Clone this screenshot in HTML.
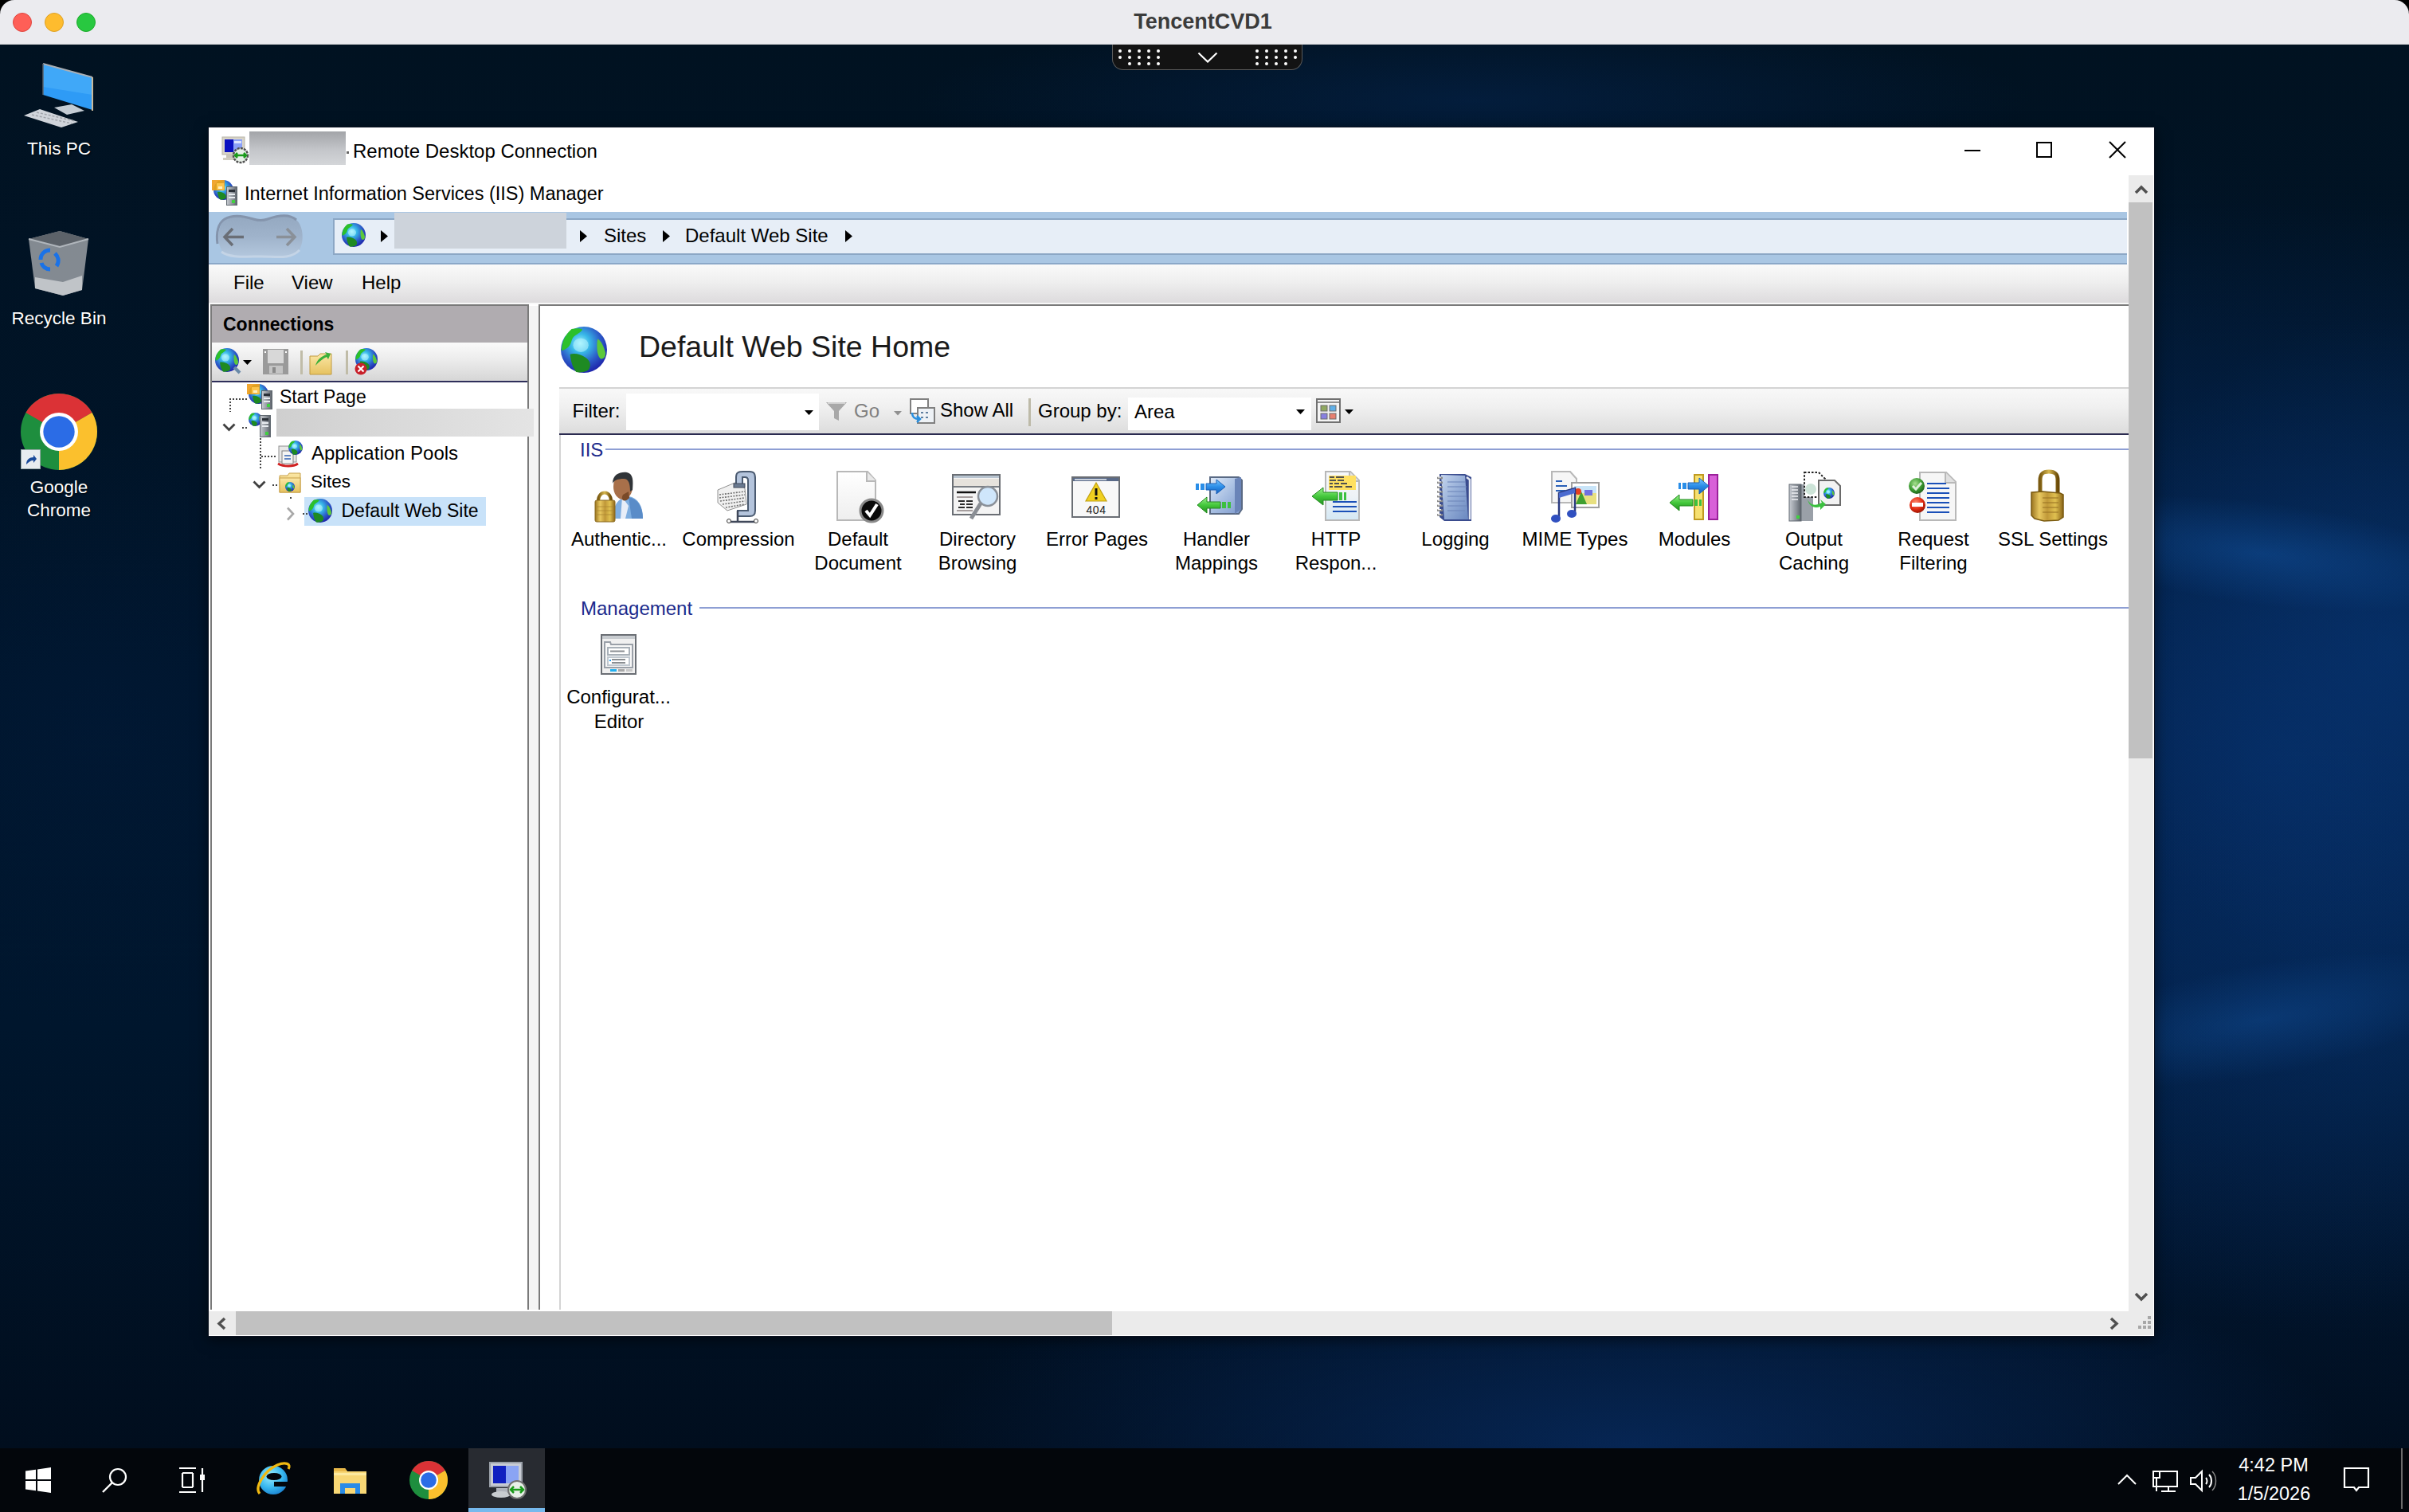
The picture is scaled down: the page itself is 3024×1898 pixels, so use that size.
<!DOCTYPE html>
<html><head><meta charset="utf-8">
<style>
*{margin:0;padding:0;box-sizing:border-box}
html,body{width:3024px;height:1898px;overflow:hidden;background:#000}
body{position:relative;font-family:"Liberation Sans",sans-serif;}
.a{position:absolute}
svg{position:absolute;overflow:visible}
.t{position:absolute;white-space:nowrap;line-height:1;font-size:24px;color:#000}
#desk{left:0;top:56px;width:3024px;height:1762px;
 background:
  radial-gradient(ellipse 700px 110px at 1850px 70px, rgba(6,42,92,0.45), rgba(5,35,90,0) 100%),
  radial-gradient(ellipse 420px 380px at 130px 860px, rgba(4,34,80,0.2), rgba(3,20,50,0) 100%),
  radial-gradient(ellipse 380px 420px at 3000px 760px, rgba(12,70,150,0.3), rgba(10,50,120,0) 100%),
  radial-gradient(ellipse 380px 380px at 2960px 1250px, rgba(12,70,150,0.15), rgba(10,50,120,0) 100%),
  radial-gradient(ellipse 900px 700px at 2850px 900px, rgba(6,48,108,0.72), rgba(5,35,90,0) 100%),
  radial-gradient(ellipse 900px 260px at 2050px 1760px, rgba(8,45,100,0.75), rgba(5,35,90,0) 100%),
  radial-gradient(ellipse 1600px 900px at 2300px 1000px, rgba(3,30,70,0.7), rgba(3,20,50,0) 100%),
  linear-gradient(180deg,#011221 0%,#00152b 45%,#00162d 70%,#010e1e 100%);}
.deskt{position:absolute;white-space:nowrap;line-height:1;font-size:22.5px;color:#fff;text-align:center;text-shadow:1px 1px 2px rgba(0,0,0,.8)}
</style></head><body>
<svg width="0" height="0" style="position:absolute"><defs>
<radialGradient id="gGlobe" cx="0.42" cy="0.36" r="0.68"><stop offset="0" stop-color="#a8f4ff"/><stop offset="0.3" stop-color="#38b8e8"/><stop offset="0.65" stop-color="#2c5cc8"/><stop offset="1" stop-color="#1c1ea8"/></radialGradient>
<radialGradient id="gLand" cx="0.35" cy="0.3" r="0.8"><stop offset="0" stop-color="#9cf07a"/><stop offset="0.5" stop-color="#36c234"/><stop offset="1" stop-color="#1a7a22"/></radialGradient>
<linearGradient id="gGold" x1="0" y1="0" x2="1" y2="0"><stop offset="0" stop-color="#9a7420"/><stop offset="0.25" stop-color="#e8c860"/><stop offset="0.5" stop-color="#c09838"/><stop offset="0.75" stop-color="#e0c050"/><stop offset="1" stop-color="#8a6418"/></linearGradient>
<linearGradient id="gShackle" x1="0" y1="0" x2="1" y2="0"><stop offset="0" stop-color="#7a5a10"/><stop offset="0.5" stop-color="#d8b850"/><stop offset="1" stop-color="#6a4a08"/></linearGradient>
<linearGradient id="gBlueArrow" x1="0" y1="0" x2="0" y2="1"><stop offset="0" stop-color="#7cc8ff"/><stop offset="0.5" stop-color="#2c8ee8"/><stop offset="1" stop-color="#1460c0"/></linearGradient>
<linearGradient id="gGreenArrow" x1="0" y1="0" x2="0" y2="1"><stop offset="0" stop-color="#9cf08c"/><stop offset="0.5" stop-color="#44c83c"/><stop offset="1" stop-color="#22901e"/></linearGradient>
<linearGradient id="gBox" x1="0" y1="0" x2="1" y2="1"><stop offset="0" stop-color="#dfeaf8"/><stop offset="0.5" stop-color="#a8bfe2"/><stop offset="1" stop-color="#7c98cc"/></linearGradient>
<linearGradient id="gBook" x1="0" y1="0" x2="1" y2="1"><stop offset="0" stop-color="#c6d6ee"/><stop offset="0.5" stop-color="#93acd6"/><stop offset="1" stop-color="#6a88c0"/></linearGradient>
<linearGradient id="gServer" x1="0" y1="0" x2="1" y2="0"><stop offset="0" stop-color="#c8ccd2"/><stop offset="0.6" stop-color="#8a9098"/><stop offset="1" stop-color="#5a6068"/></linearGradient>
<linearGradient id="gFolder" x1="0" y1="0" x2="0" y2="1"><stop offset="0" stop-color="#fbe7a6"/><stop offset="1" stop-color="#e6c260"/></linearGradient>
<radialGradient id="gRed" cx="0.4" cy="0.35" r="0.7"><stop offset="0" stop-color="#ff8a70"/><stop offset="0.6" stop-color="#e02a10"/><stop offset="1" stop-color="#901000"/></radialGradient>
<radialGradient id="gGreen" cx="0.4" cy="0.35" r="0.7"><stop offset="0" stop-color="#a8e090"/><stop offset="0.6" stop-color="#3a9a30"/><stop offset="1" stop-color="#1a5a18"/></radialGradient>
<linearGradient id="gDoc" x1="0" y1="0" x2="0" y2="1"><stop offset="0" stop-color="#ffffff"/><stop offset="1" stop-color="#eeeeee"/></linearGradient>
<linearGradient id="gBlueDoc" x1="0" y1="0" x2="0" y2="1"><stop offset="0" stop-color="#f6f8fa"/><stop offset="0.5" stop-color="#eef2f6"/><stop offset="1" stop-color="#d4e8f4"/></linearGradient>
</defs></svg>
<div id="desk" class="a"></div>
<div class="a" style="left:2560px;top:630px;width:560px;height:130px;transform:rotate(7deg);background:radial-gradient(ellipse closest-side, rgba(22,95,180,0.38), rgba(22,95,180,0))"></div>
<div class="a" style="left:2560px;top:1210px;width:560px;height:140px;transform:rotate(-10deg);background:radial-gradient(ellipse closest-side, rgba(22,95,180,0.32), rgba(22,95,180,0))"></div>
<div class="a" style="left:0px;top:0px;width:3024px;height:56px;background:#ebebef;border-radius:18px 18px 0 0;"></div>
<div class="a" style="left:0px;top:55px;width:3024px;height:1px;background:#d0d0d4"></div>
<div class="a" style="left:16px;top:16px;width:24px;height:24px;border-radius:50%;background:#fe5f57;border:1px solid #e0443e"></div>
<div class="a" style="left:56px;top:16px;width:24px;height:24px;border-radius:50%;background:#febc2e;border:1px solid #dea123"></div>
<div class="a" style="left:96px;top:16px;width:24px;height:24px;border-radius:50%;background:#28c840;border:1px solid #1aab29"></div>
<div class="t" style="left:1210px;width:600px;text-align:center;top:14.1px;font-size:27px;color:#3b3b3b;font-weight:700;">TencentCVD1</div>
<div class="a" style="left:1396px;top:56px;width:239px;height:32px;background:#131313;border-radius:0 0 14px 14px;border:1px solid #5a5a5a;border-top:none"></div>
<svg class="a" style="left:1396px;top:56px" width="239" height="32" viewBox="0 0 239 32"><circle cx="10" cy="8" r="2" fill="#fff"/><circle cx="22" cy="8" r="2" fill="#fff"/><circle cx="34" cy="8" r="2" fill="#fff"/><circle cx="46" cy="8" r="2" fill="#fff"/><circle cx="58" cy="8" r="2" fill="#fff"/><circle cx="10" cy="16" r="2" fill="#fff"/><circle cx="22" cy="16" r="2" fill="#fff"/><circle cx="34" cy="16" r="2" fill="#fff"/><circle cx="46" cy="16" r="2" fill="#fff"/><circle cx="58" cy="16" r="2" fill="#fff"/><circle cx="22" cy="24" r="2" fill="#fff"/><circle cx="34" cy="24" r="2" fill="#fff"/><circle cx="46" cy="24" r="2" fill="#fff"/><circle cx="58" cy="24" r="2" fill="#fff"/><circle cx="182" cy="8" r="2" fill="#fff"/><circle cx="194" cy="8" r="2" fill="#fff"/><circle cx="206" cy="8" r="2" fill="#fff"/><circle cx="218" cy="8" r="2" fill="#fff"/><circle cx="230" cy="8" r="2" fill="#fff"/><circle cx="182" cy="16" r="2" fill="#fff"/><circle cx="194" cy="16" r="2" fill="#fff"/><circle cx="206" cy="16" r="2" fill="#fff"/><circle cx="218" cy="16" r="2" fill="#fff"/><circle cx="230" cy="16" r="2" fill="#fff"/><circle cx="182" cy="24" r="2" fill="#fff"/><circle cx="194" cy="24" r="2" fill="#fff"/><circle cx="206" cy="24" r="2" fill="#fff"/><circle cx="218" cy="24" r="2" fill="#fff"/><path d="M108.5 10.5L120 21.5L131.5 10.5" stroke="#fff" stroke-width="2.2" fill="none"/></svg>
<svg class="a" style="left:30px;top:79px" width="88" height="84" viewBox="0 0 88 84"><path d="M24 1 L86 18 L86 59 L24 40Z" fill="#2e9bf6"/><path d="M24 1 L86 18 L86 40 L24 30Z" fill="#48aefa" opacity="0.7"/><path d="M24 1 L86 18" stroke="#a8aeb4" stroke-width="2"/><path d="M86 18 L86 60" stroke="#c8b89a" stroke-width="2"/><path d="M24 1 L24 40" stroke="#5a6068" stroke-width="1.5"/><path d="M38 56 L60 52 L76 60 L54 65Z" fill="#c4ccd4"/><path d="M0 66 L20 58 L68 74 L47 81Z" fill="#d0d4da"/><path d="M10 65 L60 76 M16 62 L64 73" stroke="#a0a4aa" stroke-width="1.5" stroke-dasharray="3 2"/></svg>
<div class="deskt" style="left:0;width:148px;top:176px">This PC</div>
<svg class="a" style="left:35px;top:288px" width="78" height="84" viewBox="0 0 78 84"><path d="M1 12 L40 2 L76 12 L68 76 L44 83 L9 74Z" fill="#8a9098" opacity="0.95"/><path d="M1 12 L40 2 L76 12 L40 22Z" fill="#5c6269"/><path d="M1 12 L40 22 L76 12" stroke="#b0b6bc" stroke-width="2" fill="none"/><path d="M9 60 L44 66 L68 58 L68 76 L44 83 L9 74Z" fill="#c0c4c8"/><path d="M16 38 C16 30 22 26 28 26 M34 30 C38 34 40 40 36 46 M28 50 C22 50 18 46 17 42" stroke="#1a72e8" stroke-width="5" fill="none"/></svg>
<div class="deskt" style="left:0;width:148px;top:389px">Recycle Bin</div>
<svg class="a" style="left:26px;top:494px" width="96" height="96" viewBox="0 0 96 96"><circle cx="48.0" cy="48.0" r="48.0" fill="#1e8e3e"/><path d="M48.0 48.0 L89.568 24.0 A48.0 48.0 0 0 0 6.432000000000002 24.0Z" fill="#db3236"/><path d="M48.0 48.0 L89.568 24.0 A48.0 48.0 0 0 1 48.0 96Z" fill="#fbc02d"/><circle cx="48.0" cy="48.0" r="24.0" fill="#fff"/><circle cx="48.0" cy="48.0" r="19.68" fill="#2b6ce6"/></svg>
<div class="a" style="left:26px;top:564px;width:25px;height:25px;background:#e8ecf0;border:1px solid #9aa;"></div>
<svg class="a" style="left:29px;top:567px" width="19" height="19" viewBox="0 0 19 19"><path d="M4 16 C4 10 8 7 13 7 L13 4 L17 9 L13 14 L13 11 C9 11 7 13 4 16Z" fill="#1a4a9a"/></svg>
<div class="deskt" style="left:0;width:148px;top:601px">Google</div>
<div class="deskt" style="left:0;width:148px;top:630px">Chrome</div>
<div class="a" style="left:261px;top:159px;width:2444px;height:1519px;background:#0b1220;box-shadow:0 4px 16px rgba(0,0,0,.55)"></div>
<div class="a" style="left:262px;top:160px;width:2442px;height:1517px;background:#fff"></div>
<svg class="a" style="left:278px;top:171px" width="34" height="34" viewBox="0 0 34 34"><rect x="1" y="1" width="28" height="22" fill="#d8d4c8" stroke="#b8b4a8"/><rect x="4" y="4" width="22" height="16" fill="#0a10c0"/><rect x="15" y="4" width="11" height="16" fill="#8aa0f8"/><rect x="16" y="6" width="9" height="3" fill="#dce4ff"/><rect x="6" y="23" width="12" height="4" fill="#c8c4b8"/><rect x="2" y="27" width="16" height="3" fill="#d0ccc0"/><circle cx="24" cy="24" r="9" fill="#e8f0e8" stroke="#505050" stroke-width="2.5" stroke-dasharray="3 1.2"/><path d="M18 24h12M20 21l-3 3 3 3M28 21l3 3-3 3" stroke="#1a9a1a" stroke-width="2.5" fill="none"/></svg>
<div class="a" style="left:313px;top:165px;width:121px;height:42px;background:linear-gradient(180deg,#a2a4a8,#c4c6ca 55%,#d4d6d9)"></div>
<div class="a" style="left:435px;top:190px;width:3px;height:3px;background:#666"></div>
<div class="t" style="left:443px;top:177.7px;font-size:24px;color:#000;font-weight:400;">Remote Desktop Connection</div>
<div class="a" style="left:2466px;top:188px;width:20px;height:2px;background:#000"></div>
<div class="a" style="left:2556px;top:178px;width:20px;height:20px;border:2px solid #000"></div>
<svg class="a" style="left:2647px;top:177px" width="22" height="22" viewBox="0 0 22 22"><path d="M1 1L21 21M21 1L1 21" stroke="#000" stroke-width="2"/></svg>
<svg class="a" style="left:268px;top:226px" width="25" height="25" viewBox="0 0 25 25"><circle cx="12.5" cy="12.5" r="12.5" fill="url(#gGlobe)"/><g transform="scale(0.4166666666666667)"><path fill="#2cc02a" d="M14 3 C20 2 26 2 28 4 C26 8 20 10 16 14 C13 18 14 24 8 28 C5 30 3 31 1 31 C1 22 4 12 14 3Z"/><path fill="#5cc83a" d="M48 16 C52 18 56 26 58 34 C58 40 56 42 52 42 C49 40 47 34 47 26 C47 22 47 18 48 16Z"/><path fill="#1e8a22" d="M12 36 C18 34 26 36 32 40 C38 44 40 50 36 56 C32 59 24 60 20 59 C16 54 13 46 12 36Z"/><ellipse cx="26" cy="24" rx="10" ry="9" fill="#b8f6ff" opacity="0.55"/></g></svg>
<svg class="a" style="left:266px;top:226px" width="32" height="32" viewBox="0 0 32 32"><rect x="0" y="0" width="16" height="13" fill="#f0a020" opacity="0.92"/><rect x="6" y="4" width="9" height="8" fill="#ffc850" opacity="0.9"/><rect x="8" y="8" width="5" height="3" fill="#fff0c0"/></svg>
<svg class="a" style="left:284px;top:234px" width="14" height="24" viewBox="0 0 14 24"><rect x="0.5" y="0.5" width="13" height="23" fill="url(#gServer)" stroke="#606870"/><rect x="3" y="4" width="8" height="3" fill="#2a3038"/><rect x="3" y="9" width="8" height="2" fill="#e8ecf0"/><rect x="3" y="13" width="8" height="2" fill="#e8ecf0"/><rect x="7" y="17" width="4" height="4" fill="#40d040"/></svg>
<div class="t" style="left:307px;top:231.7px;font-size:23.5px;color:#000;font-weight:400;">Internet Information Services (IIS) Manager</div>
<div class="a" style="left:262px;top:266px;width:2408px;height:66px;background:#a9c6e3;"></div>
<div class="a" style="left:262px;top:330px;width:2408px;height:2px;background:#8ba8c8"></div>
<div class="a" style="left:418px;top:274px;width:2252px;height:46px;background:#e7eef7;border-top:2px solid #8ca7c5;border-bottom:2px solid #8ca7c5;border-left:2px solid #8ca7c5"></div>
<svg class="a" style="left:268px;top:266px" width="116" height="60" viewBox="0 0 116 60"><defs><linearGradient id="gGlass" x1="0" y1="0" x2="0" y2="1"><stop offset="0" stop-color="#94a8c0"/><stop offset="0.5" stop-color="#9fb3cb"/><stop offset="1" stop-color="#b4c8de"/></linearGradient></defs><path d="M12 12 C20 3 36 4 50 8 C56 10 62 10 68 8 C82 4 98 3 106 12 C114 22 114 44 104 52 C94 60 76 56 60 56 C44 56 24 60 14 52 C4 44 4 22 12 12Z" fill="url(#gGlass)"/><path d="M5 40 C3 26 6 14 14 9 C24 3 38 5 50 9 C56 11 62 11 68 9 C82 4 96 3 104 10" stroke="#8494ac" stroke-width="3" fill="none"/><path d="M10 50 C20 58 40 56 60 56 C80 56 96 60 108 48" stroke="#c4d4e6" stroke-width="3" fill="none"/><path d="M15 31.5h23M24 21l-10 10.5 10 10.5" stroke="#6a6e76" stroke-width="3.5" fill="none"/><path d="M79 31.5h23M92 21l10 10.5-10 10.5" stroke="#8a9098" stroke-width="3.5" fill="none"/></svg>
<svg class="a" style="left:429px;top:280px" width="30" height="30" viewBox="0 0 30 30"><circle cx="15.0" cy="15.0" r="15.0" fill="url(#gGlobe)"/><g transform="scale(0.5)"><path fill="#2cc02a" d="M14 3 C20 2 26 2 28 4 C26 8 20 10 16 14 C13 18 14 24 8 28 C5 30 3 31 1 31 C1 22 4 12 14 3Z"/><path fill="#5cc83a" d="M48 16 C52 18 56 26 58 34 C58 40 56 42 52 42 C49 40 47 34 47 26 C47 22 47 18 48 16Z"/><path fill="#1e8a22" d="M12 36 C18 34 26 36 32 40 C38 44 40 50 36 56 C32 59 24 60 20 59 C16 54 13 46 12 36Z"/><ellipse cx="26" cy="24" rx="10" ry="9" fill="#b8f6ff" opacity="0.55"/></g></svg>
<svg class="a" style="left:478px;top:289px" width="9.0" height="15" viewBox="0 0 9.0 15"><path d="M0 0L9.0 7.5L0 15Z" fill="#000"/></svg>
<div class="a" style="left:495px;top:267px;width:216px;height:45px;background:#cdd3db"></div>
<svg class="a" style="left:728px;top:289px" width="9.0" height="15" viewBox="0 0 9.0 15"><path d="M0 0L9.0 7.5L0 15Z" fill="#000"/></svg>
<div class="t" style="left:758px;top:283.7px;font-size:24px;color:#000;font-weight:400;">Sites</div>
<svg class="a" style="left:832px;top:289px" width="9.0" height="15" viewBox="0 0 9.0 15"><path d="M0 0L9.0 7.5L0 15Z" fill="#000"/></svg>
<div class="t" style="left:860px;top:283.7px;font-size:24px;color:#000;font-weight:400;">Default Web Site</div>
<svg class="a" style="left:1061px;top:289px" width="9.0" height="15" viewBox="0 0 9.0 15"><path d="M0 0L9.0 7.5L0 15Z" fill="#000"/></svg>
<div class="a" style="left:262px;top:332px;width:2410px;height:48px;background:linear-gradient(180deg,#fafafa,#efefef 45%,#dddbdd)"></div>
<div class="a" style="left:262px;top:380px;width:2410px;height:2px;background:#f8f8f8"></div>
<div class="t" style="left:293px;top:343.4px;font-size:24px;color:#000;font-weight:400;">File</div>
<div class="t" style="left:366px;top:343.4px;font-size:24px;color:#000;font-weight:400;">View</div>
<div class="t" style="left:454px;top:343.4px;font-size:24px;color:#000;font-weight:400;">Help</div>
<div class="a" style="left:262px;top:382px;width:2410px;height:1264px;background:#fff"></div>
<div class="a" style="left:664px;top:384px;width:12px;height:1260px;background:#f4f4f4"></div>
<div class="a" style="left:264px;top:382px;width:400px;height:1262px;border:2px solid #7a7a7a;border-bottom:none;background:#fff"></div>
<div class="a" style="left:266px;top:384px;width:396px;height:46px;background:#b0acb0"></div>
<div class="a" style="left:266px;top:430px;width:396px;height:48px;background:linear-gradient(180deg,#fafafa,#ececec 45%,#d6d6d6)"></div>
<div class="a" style="left:266px;top:478px;width:396px;height:2px;background:#2e2e5a"></div>
<div class="t" style="left:280px;top:396.1px;font-size:23px;color:#000;font-weight:700;">Connections</div>
<div class="a" style="left:676px;top:382px;width:1996px;height:1262px;border-left:2px solid #7a7a7a;border-top:2px solid #7a7a7a;background:#fff"></div>
<svg class="a" style="left:270px;top:437px" width="30" height="30" viewBox="0 0 30 30"><circle cx="15.0" cy="15.0" r="15.0" fill="url(#gGlobe)"/><g transform="scale(0.5)"><path fill="#2cc02a" d="M14 3 C20 2 26 2 28 4 C26 8 20 10 16 14 C13 18 14 24 8 28 C5 30 3 31 1 31 C1 22 4 12 14 3Z"/><path fill="#5cc83a" d="M48 16 C52 18 56 26 58 34 C58 40 56 42 52 42 C49 40 47 34 47 26 C47 22 47 18 48 16Z"/><path fill="#1e8a22" d="M12 36 C18 34 26 36 32 40 C38 44 40 50 36 56 C32 59 24 60 20 59 C16 54 13 46 12 36Z"/><ellipse cx="26" cy="24" rx="10" ry="9" fill="#b8f6ff" opacity="0.55"/></g></svg>
<svg class="a" style="left:292px;top:459px" width="12" height="12" viewBox="0 0 12 12"><path d="M2 2 L9 9" stroke="#6a8aa8" stroke-width="4"/></svg>
<svg class="a" style="left:305px;top:452px" width="11" height="6.050000000000001" viewBox="0 0 11 6.050000000000001"><path d="M0 0L11 0L5.5 6.050000000000001Z" fill="#000"/></svg>
<svg class="a" style="left:330px;top:438px" width="32" height="32" viewBox="0 0 32 32"><rect x="0" y="0" width="32" height="32" fill="#9a9a9a"/><rect x="6" y="1" width="20" height="17" fill="#d8d8d8"/><rect x="8" y="21" width="17" height="10" fill="#c4c4c4"/><rect x="12" y="23" width="4" height="7" fill="#8a8a8a"/><rect x="2" y="3" width="2" height="2" fill="#fff"/><rect x="28" y="3" width="2" height="2" fill="#fff"/></svg>
<div class="a" style="left:377px;top:440px;width:3px;height:30px;background:#c0bca8"></div>
<svg class="a" style="left:388px;top:437px" width="30" height="34" viewBox="0 0 30 34"><path d="M1 10h10l3 -3h14v26H1Z" fill="url(#gFolder)" stroke="#c09a40"/><path d="M8 22 C10 14 16 10 22 8 L20 5 L27 7 L24 14 L22 11 C18 13 12 17 8 22Z" fill="#3ab03a"/></svg>
<div class="a" style="left:434px;top:440px;width:3px;height:30px;background:#c0bca8"></div>
<svg class="a" style="left:446px;top:437px" width="28" height="28" viewBox="0 0 28 28"><circle cx="14.0" cy="14.0" r="14.0" fill="url(#gGlobe)"/><g transform="scale(0.4666666666666667)"><path fill="#2cc02a" d="M14 3 C20 2 26 2 28 4 C26 8 20 10 16 14 C13 18 14 24 8 28 C5 30 3 31 1 31 C1 22 4 12 14 3Z"/><path fill="#5cc83a" d="M48 16 C52 18 56 26 58 34 C58 40 56 42 52 42 C49 40 47 34 47 26 C47 22 47 18 48 16Z"/><path fill="#1e8a22" d="M12 36 C18 34 26 36 32 40 C38 44 40 50 36 56 C32 59 24 60 20 59 C16 54 13 46 12 36Z"/><ellipse cx="26" cy="24" rx="10" ry="9" fill="#b8f6ff" opacity="0.55"/></g></svg>
<svg class="a" style="left:445px;top:455px" width="16" height="16" viewBox="0 0 16 16"><circle cx="8" cy="8" r="7.5" fill="#c8202a"/><path d="M4.5 4.5L11.5 11.5M11.5 4.5L4.5 11.5" stroke="#fff" stroke-width="2.2"/></svg>
<div class="a" style="left:288px;top:500px;width:22px;height:2px;background-image:repeating-linear-gradient(90deg,#444 0 2px,transparent 2px 4px);"></div>
<div class="a" style="left:288px;top:500px;width:2px;height:17px;background-image:repeating-linear-gradient(180deg,#444 0 2px,transparent 2px 4px);"></div>
<svg class="a" style="left:312px;top:482px" width="25" height="25" viewBox="0 0 25 25"><circle cx="12.5" cy="12.5" r="12.5" fill="url(#gGlobe)"/><g transform="scale(0.4166666666666667)"><path fill="#2cc02a" d="M14 3 C20 2 26 2 28 4 C26 8 20 10 16 14 C13 18 14 24 8 28 C5 30 3 31 1 31 C1 22 4 12 14 3Z"/><path fill="#5cc83a" d="M48 16 C52 18 56 26 58 34 C58 40 56 42 52 42 C49 40 47 34 47 26 C47 22 47 18 48 16Z"/><path fill="#1e8a22" d="M12 36 C18 34 26 36 32 40 C38 44 40 50 36 56 C32 59 24 60 20 59 C16 54 13 46 12 36Z"/><ellipse cx="26" cy="24" rx="10" ry="9" fill="#b8f6ff" opacity="0.55"/></g></svg>
<svg class="a" style="left:310px;top:482px" width="32" height="32" viewBox="0 0 32 32"><rect x="0" y="0" width="16" height="13" fill="#f0a020" opacity="0.92"/><rect x="6" y="4" width="9" height="8" fill="#ffc850" opacity="0.9"/><rect x="8" y="8" width="5" height="3" fill="#fff0c0"/></svg>
<svg class="a" style="left:328px;top:490px" width="14" height="24" viewBox="0 0 14 24"><rect x="0.5" y="0.5" width="13" height="23" fill="url(#gServer)" stroke="#606870"/><rect x="3" y="4" width="8" height="3" fill="#2a3038"/><rect x="3" y="9" width="8" height="2" fill="#e8ecf0"/><rect x="3" y="13" width="8" height="2" fill="#e8ecf0"/><rect x="7" y="17" width="4" height="4" fill="#40d040"/></svg>
<div class="t" style="left:351px;top:486.5px;font-size:23px;color:#000;font-weight:400;">Start Page</div>
<svg class="a" style="left:279px;top:531px" width="17" height="10" viewBox="0 0 17 10"><path d="M1.5 1.5L8.5 8.5L15.5 1.5" stroke="#404040" stroke-width="2.8" fill="none"/></svg>
<div class="a" style="left:304px;top:536px;width:8px;height:2px;background-image:repeating-linear-gradient(90deg,#444 0 2px,transparent 2px 4px);"></div>
<svg class="a" style="left:312px;top:518px" width="17" height="17" viewBox="0 0 17 17"><circle cx="8.5" cy="8.5" r="8.5" fill="url(#gGlobe)"/><g transform="scale(0.2833333333333333)"><path fill="#2cc02a" d="M14 3 C20 2 26 2 28 4 C26 8 20 10 16 14 C13 18 14 24 8 28 C5 30 3 31 1 31 C1 22 4 12 14 3Z"/><path fill="#5cc83a" d="M48 16 C52 18 56 26 58 34 C58 40 56 42 52 42 C49 40 47 34 47 26 C47 22 47 18 48 16Z"/><path fill="#1e8a22" d="M12 36 C18 34 26 36 32 40 C38 44 40 50 36 56 C32 59 24 60 20 59 C16 54 13 46 12 36Z"/><ellipse cx="26" cy="24" rx="10" ry="9" fill="#b8f6ff" opacity="0.55"/></g></svg>
<svg class="a" style="left:326px;top:521px" width="14" height="28" viewBox="0 0 14 28"><rect x="0.5" y="0.5" width="13" height="27" fill="url(#gServer)" stroke="#606870"/><rect x="3" y="4" width="8" height="3" fill="#2a3038"/><rect x="3" y="9" width="8" height="2" fill="#e8ecf0"/><rect x="3" y="13" width="8" height="2" fill="#e8ecf0"/><rect x="7" y="21" width="4" height="4" fill="#40d040"/></svg>
<div class="a" style="left:347px;top:513px;width:323px;height:35px;background:linear-gradient(90deg,#cfcfcf,#d8d8d8 40%,#e4e4e4)"></div>
<div class="a" style="left:326px;top:550px;width:2px;height:40px;background-image:repeating-linear-gradient(180deg,#444 0 2px,transparent 2px 4px);"></div>
<div class="a" style="left:328px;top:572px;width:20px;height:2px;background-image:repeating-linear-gradient(90deg,#444 0 2px,transparent 2px 4px);"></div>
<svg class="a" style="left:348px;top:554px" width="33" height="32" viewBox="0 0 33 32"><rect x="2" y="6" width="22" height="20" fill="#e8e8e8" stroke="#909090"/><rect x="6" y="12" width="14" height="16" fill="#f4f4f4" stroke="#808080"/><path d="M9 18h8M9 22h8" stroke="#3060b0" stroke-width="1.5"/><path d="M1 28 C8 32 20 32 26 28" stroke="#d02020" stroke-width="3" fill="none"/></svg>
<svg class="a" style="left:362px;top:553px" width="18" height="18" viewBox="0 0 18 18"><circle cx="9.0" cy="9.0" r="9.0" fill="url(#gGlobe)"/><g transform="scale(0.3)"><path fill="#2cc02a" d="M14 3 C20 2 26 2 28 4 C26 8 20 10 16 14 C13 18 14 24 8 28 C5 30 3 31 1 31 C1 22 4 12 14 3Z"/><path fill="#5cc83a" d="M48 16 C52 18 56 26 58 34 C58 40 56 42 52 42 C49 40 47 34 47 26 C47 22 47 18 48 16Z"/><path fill="#1e8a22" d="M12 36 C18 34 26 36 32 40 C38 44 40 50 36 56 C32 59 24 60 20 59 C16 54 13 46 12 36Z"/><ellipse cx="26" cy="24" rx="10" ry="9" fill="#b8f6ff" opacity="0.55"/></g></svg>
<div class="t" style="left:391px;top:556.7px;font-size:24px;color:#000;font-weight:400;">Application Pools</div>
<svg class="a" style="left:317px;top:603px" width="17" height="10" viewBox="0 0 17 10"><path d="M1.5 1.5L8.5 8.5L15.5 1.5" stroke="#404040" stroke-width="2.8" fill="none"/></svg>
<div class="a" style="left:342px;top:608px;width:8px;height:2px;background-image:repeating-linear-gradient(90deg,#444 0 2px,transparent 2px 4px);"></div>
<svg class="a" style="left:350px;top:592px" width="28" height="27" viewBox="0 0 28 27"><path d="M1 5h10l2 -3h14v24H1Z" fill="url(#gFolder)" stroke="#c8a048"/><rect x="1" y="8" width="26" height="18" fill="url(#gFolder)" stroke="#c8a048"/></svg>
<svg class="a" style="left:358px;top:605px" width="12" height="12" viewBox="0 0 12 12"><circle cx="6.0" cy="6.0" r="6.0" fill="url(#gGlobe)"/><g transform="scale(0.2)"><path fill="#2cc02a" d="M14 3 C20 2 26 2 28 4 C26 8 20 10 16 14 C13 18 14 24 8 28 C5 30 3 31 1 31 C1 22 4 12 14 3Z"/><path fill="#5cc83a" d="M48 16 C52 18 56 26 58 34 C58 40 56 42 52 42 C49 40 47 34 47 26 C47 22 47 18 48 16Z"/><path fill="#1e8a22" d="M12 36 C18 34 26 36 32 40 C38 44 40 50 36 56 C32 59 24 60 20 59 C16 54 13 46 12 36Z"/><ellipse cx="26" cy="24" rx="10" ry="9" fill="#b8f6ff" opacity="0.55"/></g></svg>
<div class="t" style="left:390px;top:594.0px;font-size:22.5px;color:#000;font-weight:400;">Sites</div>
<div class="a" style="left:364px;top:624px;width:2px;height:2px;background:#444"></div>
<div class="a" style="left:382px;top:624px;width:228px;height:36px;background:#c8e2f9"></div>
<svg class="a" style="left:359px;top:636px" width="11" height="18" viewBox="0 0 11 18"><path d="M2 1.5L9 9L2 16.5" stroke="#a8a8a8" stroke-width="2.6" fill="none"/></svg>
<div class="a" style="left:380px;top:644px;width:8px;height:2px;background-image:repeating-linear-gradient(90deg,#444 0 2px,transparent 2px 4px);"></div>
<svg class="a" style="left:387px;top:626px" width="30" height="30" viewBox="0 0 30 30"><circle cx="15.0" cy="15.0" r="15.0" fill="url(#gGlobe)"/><g transform="scale(0.5)"><path fill="#2cc02a" d="M14 3 C20 2 26 2 28 4 C26 8 20 10 16 14 C13 18 14 24 8 28 C5 30 3 31 1 31 C1 22 4 12 14 3Z"/><path fill="#5cc83a" d="M48 16 C52 18 56 26 58 34 C58 40 56 42 52 42 C49 40 47 34 47 26 C47 22 47 18 48 16Z"/><path fill="#1e8a22" d="M12 36 C18 34 26 36 32 40 C38 44 40 50 36 56 C32 59 24 60 20 59 C16 54 13 46 12 36Z"/><ellipse cx="26" cy="24" rx="10" ry="9" fill="#b8f6ff" opacity="0.55"/></g></svg>
<div class="t" style="left:428.5px;top:630.3px;font-size:23px;color:#000;font-weight:400;">Default Web Site</div>
<svg class="a" style="left:704px;top:410px" width="58" height="58" viewBox="0 0 58 58"><circle cx="29.0" cy="29.0" r="29.0" fill="url(#gGlobe)"/><g transform="scale(0.9666666666666667)"><path fill="#2cc02a" d="M14 3 C20 2 26 2 28 4 C26 8 20 10 16 14 C13 18 14 24 8 28 C5 30 3 31 1 31 C1 22 4 12 14 3Z"/><path fill="#5cc83a" d="M48 16 C52 18 56 26 58 34 C58 40 56 42 52 42 C49 40 47 34 47 26 C47 22 47 18 48 16Z"/><path fill="#1e8a22" d="M12 36 C18 34 26 36 32 40 C38 44 40 50 36 56 C32 59 24 60 20 59 C16 54 13 46 12 36Z"/><ellipse cx="26" cy="24" rx="10" ry="9" fill="#b8f6ff" opacity="0.55"/></g></svg>
<div class="t" style="left:802px;top:416.8px;font-size:37.5px;color:#1a1a1a;font-weight:400;">Default Web Site Home</div>
<div class="a" style="left:702px;top:486px;width:1970px;height:59px;background:linear-gradient(180deg,#f8f8f8,#f0f0f0 40%,#dcdcdc);border-top:2px solid #d4d4d4"></div>
<div class="a" style="left:702px;top:544px;width:1970px;height:2px;background:#2b2b50"></div>
<div class="a" style="left:702px;top:546px;width:2px;height:1098px;background:#d4d4d4"></div>
<div class="t" style="left:718.5px;top:503.7px;font-size:24px;color:#000;font-weight:400;">Filter:</div>
<div class="a" style="left:786px;top:494px;width:242px;height:46px;background:#fff"></div>
<svg class="a" style="left:1010px;top:515px" width="11" height="6.050000000000001" viewBox="0 0 11 6.050000000000001"><path d="M0 0L11 0L5.5 6.050000000000001Z" fill="#000"/></svg>
<svg class="a" style="left:1036px;top:503px" width="28" height="27" viewBox="0 0 28 27"><path d="M1 2h26l-10 11v12l-6 -3v-9Z" fill="#a8a8a8"/><path d="M3 3h22" stroke="#d0d0d0" stroke-width="2"/></svg>
<div class="t" style="left:1072px;top:503.7px;font-size:24px;color:#808080;font-weight:400;">Go</div>
<svg class="a" style="left:1122px;top:516px" width="10" height="5.5" viewBox="0 0 10 5.5"><path d="M0 0L10 0L5.0 5.5Z" fill="#909090"/></svg>
<svg class="a" style="left:1142px;top:500px" width="32" height="32" viewBox="0 0 32 32"><rect x="1" y="1" width="22" height="18" fill="#fff" stroke="#808080" stroke-width="2"/><rect x="10" y="12" width="21" height="19" fill="#eef2f6" stroke="#808080" stroke-width="2"/><path d="M14 18h3M20 18h3M14 24h3M20 24h3" stroke="#6080a0" stroke-width="2"/><path d="M3 18 C3 24 6 26 12 26 M9 22l4 4-4 4" stroke="#2a90e0" stroke-width="2.5" fill="none"/></svg>
<div class="t" style="left:1180px;top:503.2px;font-size:24px;color:#000;font-weight:400;">Show All</div>
<div class="a" style="left:1291px;top:500px;width:3px;height:35px;background:#bdbaa8"></div>
<div class="t" style="left:1303px;top:503.7px;font-size:24px;color:#000;font-weight:400;">Group by:</div>
<div class="a" style="left:1416px;top:499px;width:230px;height:41px;background:#fff"></div>
<div class="t" style="left:1424px;top:504.7px;font-size:24px;color:#000;font-weight:400;">Area</div>
<svg class="a" style="left:1627px;top:514px" width="11" height="6.050000000000001" viewBox="0 0 11 6.050000000000001"><path d="M0 0L11 0L5.5 6.050000000000001Z" fill="#000"/></svg>
<svg class="a" style="left:1652px;top:500px" width="31" height="31" viewBox="0 0 31 31"><rect x="1" y="1" width="29" height="29" fill="#f4f4f4" stroke="#707070" stroke-width="2"/><path d="M2 5h27" stroke="#909090" stroke-width="2"/><rect x="6" y="9" width="8" height="7" fill="#90a860" stroke="#6a6a6a"/><rect x="17" y="9" width="8" height="7" fill="#60b0e8" stroke="#6a6a6a"/><rect x="6" y="19" width="8" height="7" fill="#8880e0" stroke="#6a6a6a"/><rect x="17" y="19" width="8" height="7" fill="#e88070" stroke="#6a6a6a"/></svg>
<svg class="a" style="left:1688px;top:514px" width="11" height="6.050000000000001" viewBox="0 0 11 6.050000000000001"><path d="M0 0L11 0L5.5 6.050000000000001Z" fill="#000"/></svg>
<div class="t" style="left:728px;top:553.4px;font-size:24px;color:#1c2a8c;font-weight:400;">IIS</div>
<div class="a" style="left:760px;top:563px;width:1912px;height:2px;background:#8e9fd4"></div>
<div class="t" style="left:477px;width:600px;text-align:center;top:664.7px;font-size:24px;color:#000;font-weight:400;">Authentic...</div>
<div class="t" style="left:627px;width:600px;text-align:center;top:664.7px;font-size:24px;color:#000;font-weight:400;">Compression</div>
<div class="t" style="left:777px;width:600px;text-align:center;top:664.7px;font-size:24px;color:#000;font-weight:400;">Default</div>
<div class="t" style="left:777px;width:600px;text-align:center;top:695.4px;font-size:24px;color:#000;font-weight:400;">Document</div>
<div class="t" style="left:927px;width:600px;text-align:center;top:664.7px;font-size:24px;color:#000;font-weight:400;">Directory</div>
<div class="t" style="left:927px;width:600px;text-align:center;top:695.4px;font-size:24px;color:#000;font-weight:400;">Browsing</div>
<div class="t" style="left:1077px;width:600px;text-align:center;top:664.7px;font-size:24px;color:#000;font-weight:400;">Error Pages</div>
<div class="t" style="left:1227px;width:600px;text-align:center;top:664.7px;font-size:24px;color:#000;font-weight:400;">Handler</div>
<div class="t" style="left:1227px;width:600px;text-align:center;top:695.4px;font-size:24px;color:#000;font-weight:400;">Mappings</div>
<div class="t" style="left:1377px;width:600px;text-align:center;top:664.7px;font-size:24px;color:#000;font-weight:400;">HTTP</div>
<div class="t" style="left:1377px;width:600px;text-align:center;top:695.4px;font-size:24px;color:#000;font-weight:400;">Respon...</div>
<div class="t" style="left:1527px;width:600px;text-align:center;top:664.7px;font-size:24px;color:#000;font-weight:400;">Logging</div>
<div class="t" style="left:1677px;width:600px;text-align:center;top:664.7px;font-size:24px;color:#000;font-weight:400;">MIME Types</div>
<div class="t" style="left:1827px;width:600px;text-align:center;top:664.7px;font-size:24px;color:#000;font-weight:400;">Modules</div>
<div class="t" style="left:1977px;width:600px;text-align:center;top:664.7px;font-size:24px;color:#000;font-weight:400;">Output</div>
<div class="t" style="left:1977px;width:600px;text-align:center;top:695.4px;font-size:24px;color:#000;font-weight:400;">Caching</div>
<div class="t" style="left:2127px;width:600px;text-align:center;top:664.7px;font-size:24px;color:#000;font-weight:400;">Request</div>
<div class="t" style="left:2127px;width:600px;text-align:center;top:695.4px;font-size:24px;color:#000;font-weight:400;">Filtering</div>
<div class="t" style="left:2277px;width:600px;text-align:center;top:664.7px;font-size:24px;color:#000;font-weight:400;">SSL Settings</div>
<svg class="a" style="left:745px;top:591px" width="64" height="66" viewBox="0 0 64 66"><path d="M25 60 C24 44 30 34 44 32 C56 34 62 44 62 60Z" fill="#7eaee0"/><path d="M44 33 C56 35 62 46 62 60 L48 60Z" fill="#5a8cc8"/><path d="M36 33 L44 44 L40 60 L34 60Z" fill="#e8eef8"/><ellipse cx="37" cy="20" rx="12" ry="16" fill="#a8704a"/><path d="M37 30 C33 38 40 40 45 34 L44 26Z" fill="#7a4a28"/><path d="M24 16 C24 4 34 1 42 2 C50 4 50 12 49 24 L46 26 C46 16 44 10 38 10 C30 10 26 12 24 16Z" fill="#303438"/><path d="M6 38 C6 24 22 24 22 38" stroke="url(#gShackle)" stroke-width="4" fill="none"/><rect x="2" y="37" width="25" height="27" rx="2" fill="url(#gGold)" stroke="#8a6a20" stroke-width="1"/><path d="M4 45h21M4 50h21M4 55h21" stroke="#a88430" stroke-width="1" opacity="0.7"/></svg>
<svg class="a" style="left:895px;top:591px" width="64" height="66" viewBox="0 0 64 66"><path d="M6 24 L30 14 L40 22 L42 42 L18 50 L6 40Z" fill="#f0f0f0" stroke="#909090"/><path d="M8 30 L40 26 M8 34 L40 30 M9 38 L40 34 M12 42 L40 38 M16 46 L40 42" stroke="#707070" stroke-width="1.6" stroke-dasharray="2 1.5"/><path d="M29 18 L29 8 C29 2 32 1 38 1 L46 1 C52 1 53 4 53 10 L53 50 C53 56 50 57 46 57 L31 57 L31 50 L44 50 L44 12 C44 9 43 8 40 8 L37 8 L37 18Z" fill="#b4c4dc" stroke="#4a5a70" stroke-width="2"/><rect x="26" y="16" width="14" height="5" fill="#6a7a90" stroke="#40485a"/><path d="M31 50 L31 64 M20 64 L54 64" stroke="#40485a" stroke-width="2.5"/><circle cx="20" cy="63" r="2.5" fill="#fff" stroke="#333"/><circle cx="54" cy="63" r="2.5" fill="#fff" stroke="#333"/></svg>
<svg class="a" style="left:1045px;top:591px" width="66" height="66" viewBox="0 0 66 66"><path d="M6 1 L44 1 L54 12 L54 62 L6 62Z" fill="url(#gDoc)" stroke="#b8b8b8" stroke-width="2"/><path d="M43 1 L43 13 L55 13" fill="#e8e8e8" stroke="#b8b8b8" stroke-width="2"/><circle cx="49" cy="50" r="14" fill="#0a0a0a" stroke="#8a8a8a" stroke-width="3"/><path d="M42 50 L47 56 L56 42" stroke="#fff" stroke-width="4" fill="none"/></svg>
<svg class="a" style="left:1195px;top:591px" width="66" height="66" viewBox="0 0 66 66"><rect x="1" y="5" width="59" height="50" fill="#f4f4f4" stroke="#6a6e74" stroke-width="2"/><rect x="2" y="6" width="57" height="3" fill="#b8c4d0"/><rect x="2" y="10" width="57" height="9" fill="#e6e2dc"/><path d="M2 20h57" stroke="#7a7e84" stroke-width="2"/><path d="M6 27h24" stroke="#111" stroke-width="2.5"/><path d="M6 33h20M6 50h20" stroke="#8a8080" stroke-width="1.5"/><path d="M8 38h8M18 38h8M10 42h6M18 42h8M8 46h8M18 46h8" stroke="#2a2a2a" stroke-width="2"/><path d="M36 41 L24 60" stroke="#8a8e94" stroke-width="5"/><circle cx="45" cy="32" r="12" fill="#cfe6fb" stroke="#8a9098" stroke-width="2.5"/></svg>
<svg class="a" style="left:1345px;top:591px" width="66" height="66" viewBox="0 0 66 66"><rect x="1" y="8" width="59" height="50" fill="#f8f8f8" stroke="#6a6e74" stroke-width="2"/><rect x="2" y="9" width="57" height="4" fill="#5a6a88"/><rect x="4" y="10" width="40" height="2" fill="#c8d0dc"/><path d="M31 15 L44 38 L18 38Z" fill="#f0d020" stroke="#c0a010" stroke-width="1.2"/><path d="M31 22v9" stroke="#111" stroke-width="3"/><rect x="29.5" y="33" width="3" height="3" fill="#111"/><text x="31" y="54" font-family="Liberation Sans" font-size="14" text-anchor="middle" fill="#222" letter-spacing="0.5">404</text></svg>
<svg class="a" style="left:1495px;top:591px" width="66" height="66" viewBox="0 0 66 66"><path d="M24 8 L60 8 L64 12 L64 48 L60 54 L24 54Z" fill="url(#gBox)" stroke="#5a6a84" stroke-width="2"/><path d="M55 10 L63 8 L63 48 L55 54Z" fill="#6a84b8"/><path d="M6 16h4v8H6Z M12 16h5v8h-5Z" fill="#2a8ee8"/><path d="M19 16 L32 16 L32 11 L43 20 L32 29 L32 24 L19 24Z" fill="url(#gBlueArrow)" stroke="#1a60b8" stroke-width="1"/><path d="M50 39h-4v8h4Z M44 39h-5v8h5Z" fill="#3cc040"/><path d="M37 39 L20 39 L20 33 L8 43 L20 53 L20 47 L37 47Z" fill="url(#gGreenArrow)" stroke="#228a1e" stroke-width="1"/></svg>
<svg class="a" style="left:1645px;top:591px" width="66" height="66" viewBox="0 0 66 66"><path d="M19 1 L50 1 L61 12 L61 62 L19 62Z" fill="url(#gBlueDoc)" stroke="#b8b8b8" stroke-width="2"/><path d="M49 1 L49 13 L61 13" fill="#e4e4e4" stroke="#b8b8b8" stroke-width="2"/><rect x="23" y="6" width="34" height="18" fill="#ffe060"/><path d="M24 8h6M32 8h10M24 12h8M34 12h8M24 16h4M30 16h6M38 16h8M24 20h4M30 20h10M44 20h8" stroke="#505050" stroke-width="2"/><path d="M28 39h30M28 45h30M28 51h30" stroke="#1a50b8" stroke-width="2"/><path d="M42 27h3v10h-3Z M36 27h4v10h-4Z" fill="#3cc040"/><path d="M34 27 L16 27 L16 21 L2 32 L16 43 L16 37 L34 37Z" fill="url(#gGreenArrow)" stroke="#228a1e" stroke-width="1"/></svg>
<svg class="a" style="left:1795px;top:591px" width="66" height="66" viewBox="0 0 66 66"><path d="M12 4 L44 4 L52 8 L52 63 L18 63 L12 58Z" fill="#3a4c8e"/><path d="M14 5 L44 6 L48 61 L18 61Z" fill="url(#gBook)"/><path d="M22 14h22M22 20h24M22 26h22M22 32h24M22 38h22M22 44h24M22 50h22" stroke="#6f88bc" stroke-width="2" opacity="0.55"/><path d="M46 8 L50 11 L50 61" stroke="#e8ecf4" stroke-width="2.5" fill="none"/><path d="M9 9.0h7" stroke="#8a8a8a" stroke-width="2.5"/><path d="M10 8.0h4" stroke="#f0f0f0" stroke-width="1.2"/><path d="M9 14.8h7" stroke="#8a8a8a" stroke-width="2.5"/><path d="M10 13.8h4" stroke="#f0f0f0" stroke-width="1.2"/><path d="M9 20.6h7" stroke="#8a8a8a" stroke-width="2.5"/><path d="M10 19.6h4" stroke="#f0f0f0" stroke-width="1.2"/><path d="M9 26.4h7" stroke="#8a8a8a" stroke-width="2.5"/><path d="M10 25.4h4" stroke="#f0f0f0" stroke-width="1.2"/><path d="M9 32.2h7" stroke="#8a8a8a" stroke-width="2.5"/><path d="M10 31.2h4" stroke="#f0f0f0" stroke-width="1.2"/><path d="M9 38.0h7" stroke="#8a8a8a" stroke-width="2.5"/><path d="M10 37.0h4" stroke="#f0f0f0" stroke-width="1.2"/><path d="M9 43.8h7" stroke="#8a8a8a" stroke-width="2.5"/><path d="M10 42.8h4" stroke="#f0f0f0" stroke-width="1.2"/><path d="M9 49.6h7" stroke="#8a8a8a" stroke-width="2.5"/><path d="M10 48.6h4" stroke="#f0f0f0" stroke-width="1.2"/><path d="M9 55.4h7" stroke="#8a8a8a" stroke-width="2.5"/><path d="M10 54.4h4" stroke="#f0f0f0" stroke-width="1.2"/></svg>
<svg class="a" style="left:1945px;top:591px" width="66" height="66" viewBox="0 0 66 66"><path d="M3 1 L26 1 L34 10 L34 40 L3 40Z" fill="#f6f6f6" stroke="#b8b8b8" stroke-width="2"/><path d="M8 13h8M8 19h14M8 25h12" stroke="#2a60b8" stroke-width="1.8"/><rect x="28" y="15" width="34" height="31" fill="#fff" stroke="#a0a0a0" stroke-width="2"/><rect x="31" y="19" width="28" height="23" fill="#c8e4f8"/><rect x="31" y="28" width="28" height="14" fill="#e8e080"/><path d="M33 42 L40 26 L47 42Z" fill="#40a030"/><circle cx="36" cy="26" r="4" fill="#e84020"/><rect x="44" y="24" width="10" height="7" fill="#7070e0"/><path d="M12 60 L12 28 L32 22 L32 54" stroke="#2a3a80" stroke-width="2.5" fill="none"/><path d="M12 28 L32 22 L32 28 L12 34Z" fill="#4a6ad0"/><ellipse cx="8" cy="60" rx="6" ry="5" fill="#3050c0"/><ellipse cx="28" cy="54" rx="6" ry="5" fill="#3050c0"/></svg>
<svg class="a" style="left:2095px;top:591px" width="66" height="66" viewBox="0 0 66 66"><rect x="32" y="5" width="11" height="56" fill="#f6e070" stroke="#c09a20" stroke-width="2"/><rect x="50" y="5" width="11" height="56" fill="#d860d8" stroke="#9a209a" stroke-width="2"/><path d="M12 15h3v8h-3Z M17 15h5v8h-5Z" fill="#2a8ee8"/><path d="M24 15 L38 15 L38 9 L50 19 L38 29 L38 23 L24 23Z" fill="url(#gBlueArrow)" stroke="#1a60b8" stroke-width="1"/><path d="M41 36h-3v8h3Z M36 36h-4v8h4Z" fill="#3cc040"/><path d="M30 36 L13 36 L13 30 L1 40 L13 50 L13 44 L30 44Z" fill="url(#gGreenArrow)" stroke="#228a1e" stroke-width="1"/></svg>
<svg class="a" style="left:2245px;top:591px" width="66" height="66" viewBox="0 0 66 66"><path d="M1 17 L22 17 L31 28 L31 63 L9 63 L1 58Z" fill="#9aa0a8"/><rect x="1" y="17" width="15" height="46" fill="url(#gServer)" stroke="#606870"/><path d="M4 20h8M4 24h8M4 28h8M4 32h8M4 36h8" stroke="#eef0f4" stroke-width="1.5"/><rect x="10" y="56" width="4" height="4" fill="#40d040"/><path d="M20 2 L38 2 L46 10 L46 33 L20 33Z" fill="#fff" stroke="#222" stroke-width="2" stroke-dasharray="2.5 2"/><circle cx="28" cy="23" r="7" fill="#b8d8c8" opacity="0.7"/><path d="M38 12 L58 12 L65 19 L65 43 L38 43Z" fill="#f2f2f2" stroke="#6a6a6a" stroke-width="2"/><path d="M24 36 C28 44 34 44 42 40 L40 36 L47 42 L40 49 L40 45 C32 48 26 44 24 36Z" fill="#3cc040"/></svg>
<svg class="a" style="left:2289px;top:612px" width="14" height="14" viewBox="0 0 14 14"><circle cx="7.0" cy="7.0" r="7.0" fill="url(#gGlobe)"/><g transform="scale(0.23333333333333334)"><path fill="#2cc02a" d="M14 3 C20 2 26 2 28 4 C26 8 20 10 16 14 C13 18 14 24 8 28 C5 30 3 31 1 31 C1 22 4 12 14 3Z"/><path fill="#5cc83a" d="M48 16 C52 18 56 26 58 34 C58 40 56 42 52 42 C49 40 47 34 47 26 C47 22 47 18 48 16Z"/><path fill="#1e8a22" d="M12 36 C18 34 26 36 32 40 C38 44 40 50 36 56 C32 59 24 60 20 59 C16 54 13 46 12 36Z"/><ellipse cx="26" cy="24" rx="10" ry="9" fill="#b8f6ff" opacity="0.55"/></g></svg>
<svg class="a" style="left:2395px;top:591px" width="66" height="66" viewBox="0 0 66 66"><path d="M15 2 L48 2 L60 14 L60 62 L15 62Z" fill="#f6f6f6" stroke="#b8b8b8" stroke-width="2"/><path d="M47 2 L47 15 L60 15" fill="#e0e0e0" stroke="#b8b8b8" stroke-width="2"/><path d="M24 16h24" stroke="#1a50b8" stroke-width="2"/><path d="M24 22h28" stroke="#1a50b8" stroke-width="2"/><path d="M24 28h28" stroke="#1a50b8" stroke-width="2"/><path d="M24 34h28" stroke="#1a50b8" stroke-width="2"/><path d="M24 40h28" stroke="#1a50b8" stroke-width="2"/><path d="M24 46h28" stroke="#1a50b8" stroke-width="2"/><path d="M24 52h28" stroke="#1a50b8" stroke-width="2"/><circle cx="11" cy="19" r="10" fill="url(#gGreen)"/><path d="M6 19 L10 23 L17 15" stroke="#fff" stroke-width="3" fill="none" opacity="0.8"/><circle cx="12" cy="43" r="10" fill="url(#gRed)"/><rect x="5" y="40" width="14" height="5" fill="#fff"/></svg>
<svg class="a" style="left:2540px;top:591px" width="66" height="66" viewBox="0 0 66 66"><path d="M21 28 L21 12 C21 3 25 1 32 1 C39 1 43 3 43 12 L43 28" stroke="url(#gShackle)" stroke-width="5" fill="none"/><path d="M10 27 L24 26 L46 28 L50 30 L50 58 L44 62 L26 63 L14 60 L10 56Z" fill="url(#gGold)" stroke="#7a5a10" stroke-width="1.5"/><path d="M24 34h20M24 40h20M24 46h20M24 52h20" stroke="#9a7424" stroke-width="1.5" opacity="0.7"/></svg>
<svg class="a" style="left:754px;top:796px" width="46" height="52" viewBox="0 0 46 52"><rect x="1" y="1" width="43" height="49" fill="#f0f0f0" stroke="#6a6e74" stroke-width="2"/><rect x="2" y="2" width="41" height="4" fill="#c8ccd0"/><path d="M5 10 L12 10 L13 13 L40 13 L40 42 L5 42Z" fill="#f8f8f8" stroke="#9aa0a8" stroke-width="2"/><rect x="9" y="17" width="27" height="9" fill="#fff" stroke="#a8b0b8" stroke-width="2"/><path d="M12 21.5h18" stroke="#8a8e92" stroke-width="2"/><rect x="9" y="29" width="27" height="10" fill="#fff" stroke="#c0c8d0" stroke-width="2"/><path d="M14 32h17M14 36h17" stroke="#8a8e92" stroke-width="2"/><rect x="11" y="32" width="2" height="2" fill="#20a0f0"/><rect x="12" y="44" width="8" height="3" fill="#20b0f0"/><rect x="22" y="44" width="8" height="3" fill="#a8a8a8"/><rect x="32" y="44" width="8" height="3" fill="#c8c8c8"/></svg>
<div class="t" style="left:729px;top:751.7px;font-size:24px;color:#1c2a8c;font-weight:400;">Management</div>
<div class="a" style="left:878px;top:762px;width:1794px;height:2px;background:#8e9fd4"></div>
<div class="t" style="left:476.5px;width:600px;text-align:center;top:863.1px;font-size:24px;color:#000;font-weight:400;">Configurat...</div>
<div class="t" style="left:477px;width:600px;text-align:center;top:893.6px;font-size:24px;color:#000;font-weight:400;">Editor</div>
<div class="a" style="left:2672px;top:220px;width:31px;height:1426px;background:#ebebeb"></div>
<div class="a" style="left:2672px;top:254px;width:30px;height:698px;background:#c1c1c1"></div>
<svg class="a" style="left:2680px;top:232px" width="16" height="12" viewBox="0 0 16 12"><path d="M1 10L8 3L15 10" stroke="#505050" stroke-width="3.5" fill="none"/></svg>
<svg class="a" style="left:2680px;top:1622px" width="16" height="12" viewBox="0 0 16 12"><path d="M1 2L8 9L15 2" stroke="#505050" stroke-width="3.5" fill="none"/></svg>
<div class="a" style="left:262px;top:1646px;width:2410px;height:30px;background:#ebebeb"></div>
<div class="a" style="left:296px;top:1646px;width:1100px;height:30px;background:#c1c1c1"></div>
<svg class="a" style="left:272px;top:1654px" width="12" height="15" viewBox="0 0 12 15"><path d="M10 1L3 7.5L10 14" stroke="#505050" stroke-width="3.5" fill="none"/></svg>
<svg class="a" style="left:2648px;top:1654px" width="12" height="15" viewBox="0 0 12 15"><path d="M2 1L9 7.5L2 14" stroke="#505050" stroke-width="3.5" fill="none"/></svg>
<div class="a" style="left:2672px;top:1646px;width:31px;height:30px;background:#ebebeb"></div>
<svg class="a" style="left:2672px;top:1646px" width="31" height="30" viewBox="0 0 31 30"><rect x="24" y="6" width="4" height="4" fill="#a8a8a8"/><rect x="18" y="12" width="4" height="4" fill="#a8a8a8"/><rect x="24" y="12" width="4" height="4" fill="#a8a8a8"/><rect x="12" y="18" width="4" height="4" fill="#a8a8a8"/><rect x="18" y="18" width="4" height="4" fill="#a8a8a8"/><rect x="24" y="18" width="4" height="4" fill="#a8a8a8"/></svg>
<div class="a" style="left:0px;top:1818px;width:3024px;height:80px;background:#03060b"></div>
<svg class="a" style="left:32px;top:1842px" width="32" height="32" viewBox="0 0 32 32"><path d="M0 4.5L13 2.7V15H0Z M15 2.4L32 0V15H15Z M0 17H13V29.3L0 27.5Z M15 17H32V32L15 29.6Z" fill="#fff"/></svg>
<svg class="a" style="left:128px;top:1842px" width="32" height="32" viewBox="0 0 32 32"><circle cx="20" cy="12" r="10" stroke="#fff" stroke-width="2.2" fill="none"/><path d="M13 19L1 31" stroke="#fff" stroke-width="2.4"/></svg>
<svg class="a" style="left:224px;top:1842px" width="32" height="32" viewBox="0 0 32 32"><path d="M1 1h21M1 31h21M5 7v18M18 7v18M5 7h13M5 25h13M30 1v30" stroke="#fff" stroke-width="2.2" fill="none"/><rect x="27" y="9" width="6" height="7" fill="#fff"/></svg>
<svg class="a" style="left:320px;top:1834px" width="44" height="44" viewBox="0 0 44 44"><defs><radialGradient id="gIE" cx="0.4" cy="0.35" r="0.7"><stop offset="0" stop-color="#9ef0ff"/><stop offset="0.6" stop-color="#38b8f0"/><stop offset="1" stop-color="#1a80d0"/></radialGradient></defs><circle cx="23" cy="24" r="18" fill="url(#gIE)"/><ellipse cx="24" cy="19.5" rx="9.5" ry="4.5" fill="#03060b"/><rect x="24" y="26" width="19" height="6" fill="#03060b"/><path d="M6 41 C-1 33 12 12 28 5 C38 1 46 3 42 10" stroke="#f0b810" stroke-width="3.2" fill="none"/></svg>
<svg class="a" style="left:418px;top:1840px" width="43" height="36" viewBox="0 0 43 36"><path d="M1 3h14l3 4h24v28H1Z" fill="#f8d775"/><path d="M1 3h14l3 4H1Z" fill="#e8b84a"/><rect x="1" y="9" width="41" height="3" fill="#fdeaa0"/><path d="M9 35V22h25v13h-6v-7h-13v7Z" fill="#2a8be6"/></svg>
<svg class="a" style="left:514px;top:1834px" width="48" height="48" viewBox="0 0 48 48"><circle cx="24.0" cy="24.0" r="24.0" fill="#1e8e3e"/><path d="M24.0 24.0 L44.784 12.0 A24.0 24.0 0 0 0 3.216000000000001 12.0Z" fill="#db3236"/><path d="M24.0 24.0 L44.784 12.0 A24.0 24.0 0 0 1 24.0 48Z" fill="#fbc02d"/><circle cx="24.0" cy="24.0" r="12.0" fill="#fff"/><circle cx="24.0" cy="24.0" r="9.84" fill="#2b6ce6"/></svg>
<div class="a" style="left:588px;top:1818px;width:96px;height:80px;background:#282b31"></div>
<div class="a" style="left:588px;top:1893px;width:96px;height:5px;background:#76b9ed"></div>
<svg class="a" style="left:613px;top:1834px" width="48" height="48" viewBox="0 0 48 48"><rect x="2" y="2" width="40" height="30" fill="#c8ccd4" stroke="#9aa0a8" stroke-width="2"/><rect x="6" y="6" width="32" height="22" fill="#1020c0"/><rect x="22" y="6" width="16" height="22" fill="#8aa4f4"/><rect x="10" y="34" width="18" height="5" fill="#b0b4bc"/><ellipse cx="16" cy="42" rx="12" ry="4" fill="#c8ccd0"/><circle cx="36" cy="36" r="11" fill="#e8f0e8" stroke="#707070" stroke-width="2"/><path d="M29 36h14M32 32l-4 4 4 4M40 32l4 4-4 4" stroke="#1a9a1a" stroke-width="2.5" fill="none"/></svg>
<svg class="a" style="left:2658px;top:1850px" width="24" height="14" viewBox="0 0 24 14"><path d="M1 13L12 2L23 13" stroke="#fff" stroke-width="2" fill="none"/></svg>
<svg class="a" style="left:2702px;top:1846px" width="32" height="27" viewBox="0 0 32 27"><rect x="1" y="1" width="30" height="19" stroke="#fff" stroke-width="2" fill="none"/><rect x="1" y="1" width="8" height="8" stroke="#fff" stroke-width="2" fill="none"/><path d="M5 9v17M11 26h18M20 20v6" stroke="#fff" stroke-width="2"/></svg>
<svg class="a" style="left:2749px;top:1845px" width="34" height="28" viewBox="0 0 34 28"><path d="M1 10h6l8-8v24l-8-8H1Z" stroke="#fff" stroke-width="2" fill="none"/><path d="M20 10 C22 12 22 16 20 18" stroke="#fff" stroke-width="2" fill="none"/><path d="M24 6 C28 10 28 18 24 22" stroke="#fff" stroke-width="2" fill="none"/><path d="M28 2 C34 8 34 20 28 26" stroke="#888" stroke-width="1.5" fill="none"/></svg>
<div class="t" style="left:2554px;width:600px;text-align:center;top:1827.6px;font-size:23.5px;color:#fff;font-weight:400;">4:42 PM</div>
<div class="t" style="left:2554.5px;width:600px;text-align:center;top:1864.1px;font-size:23.5px;color:#fff;font-weight:400;">1/5/2026</div>
<svg class="a" style="left:2942px;top:1842px" width="32" height="32" viewBox="0 0 32 32"><path d="M1 1h30v24H19l-3 4-3-4H1Z" stroke="#fff" stroke-width="2.2" fill="none"/></svg>
<div class="a" style="left:3014px;top:1818px;width:2px;height:76px;background:#6a6a6a"></div>
</body></html>
